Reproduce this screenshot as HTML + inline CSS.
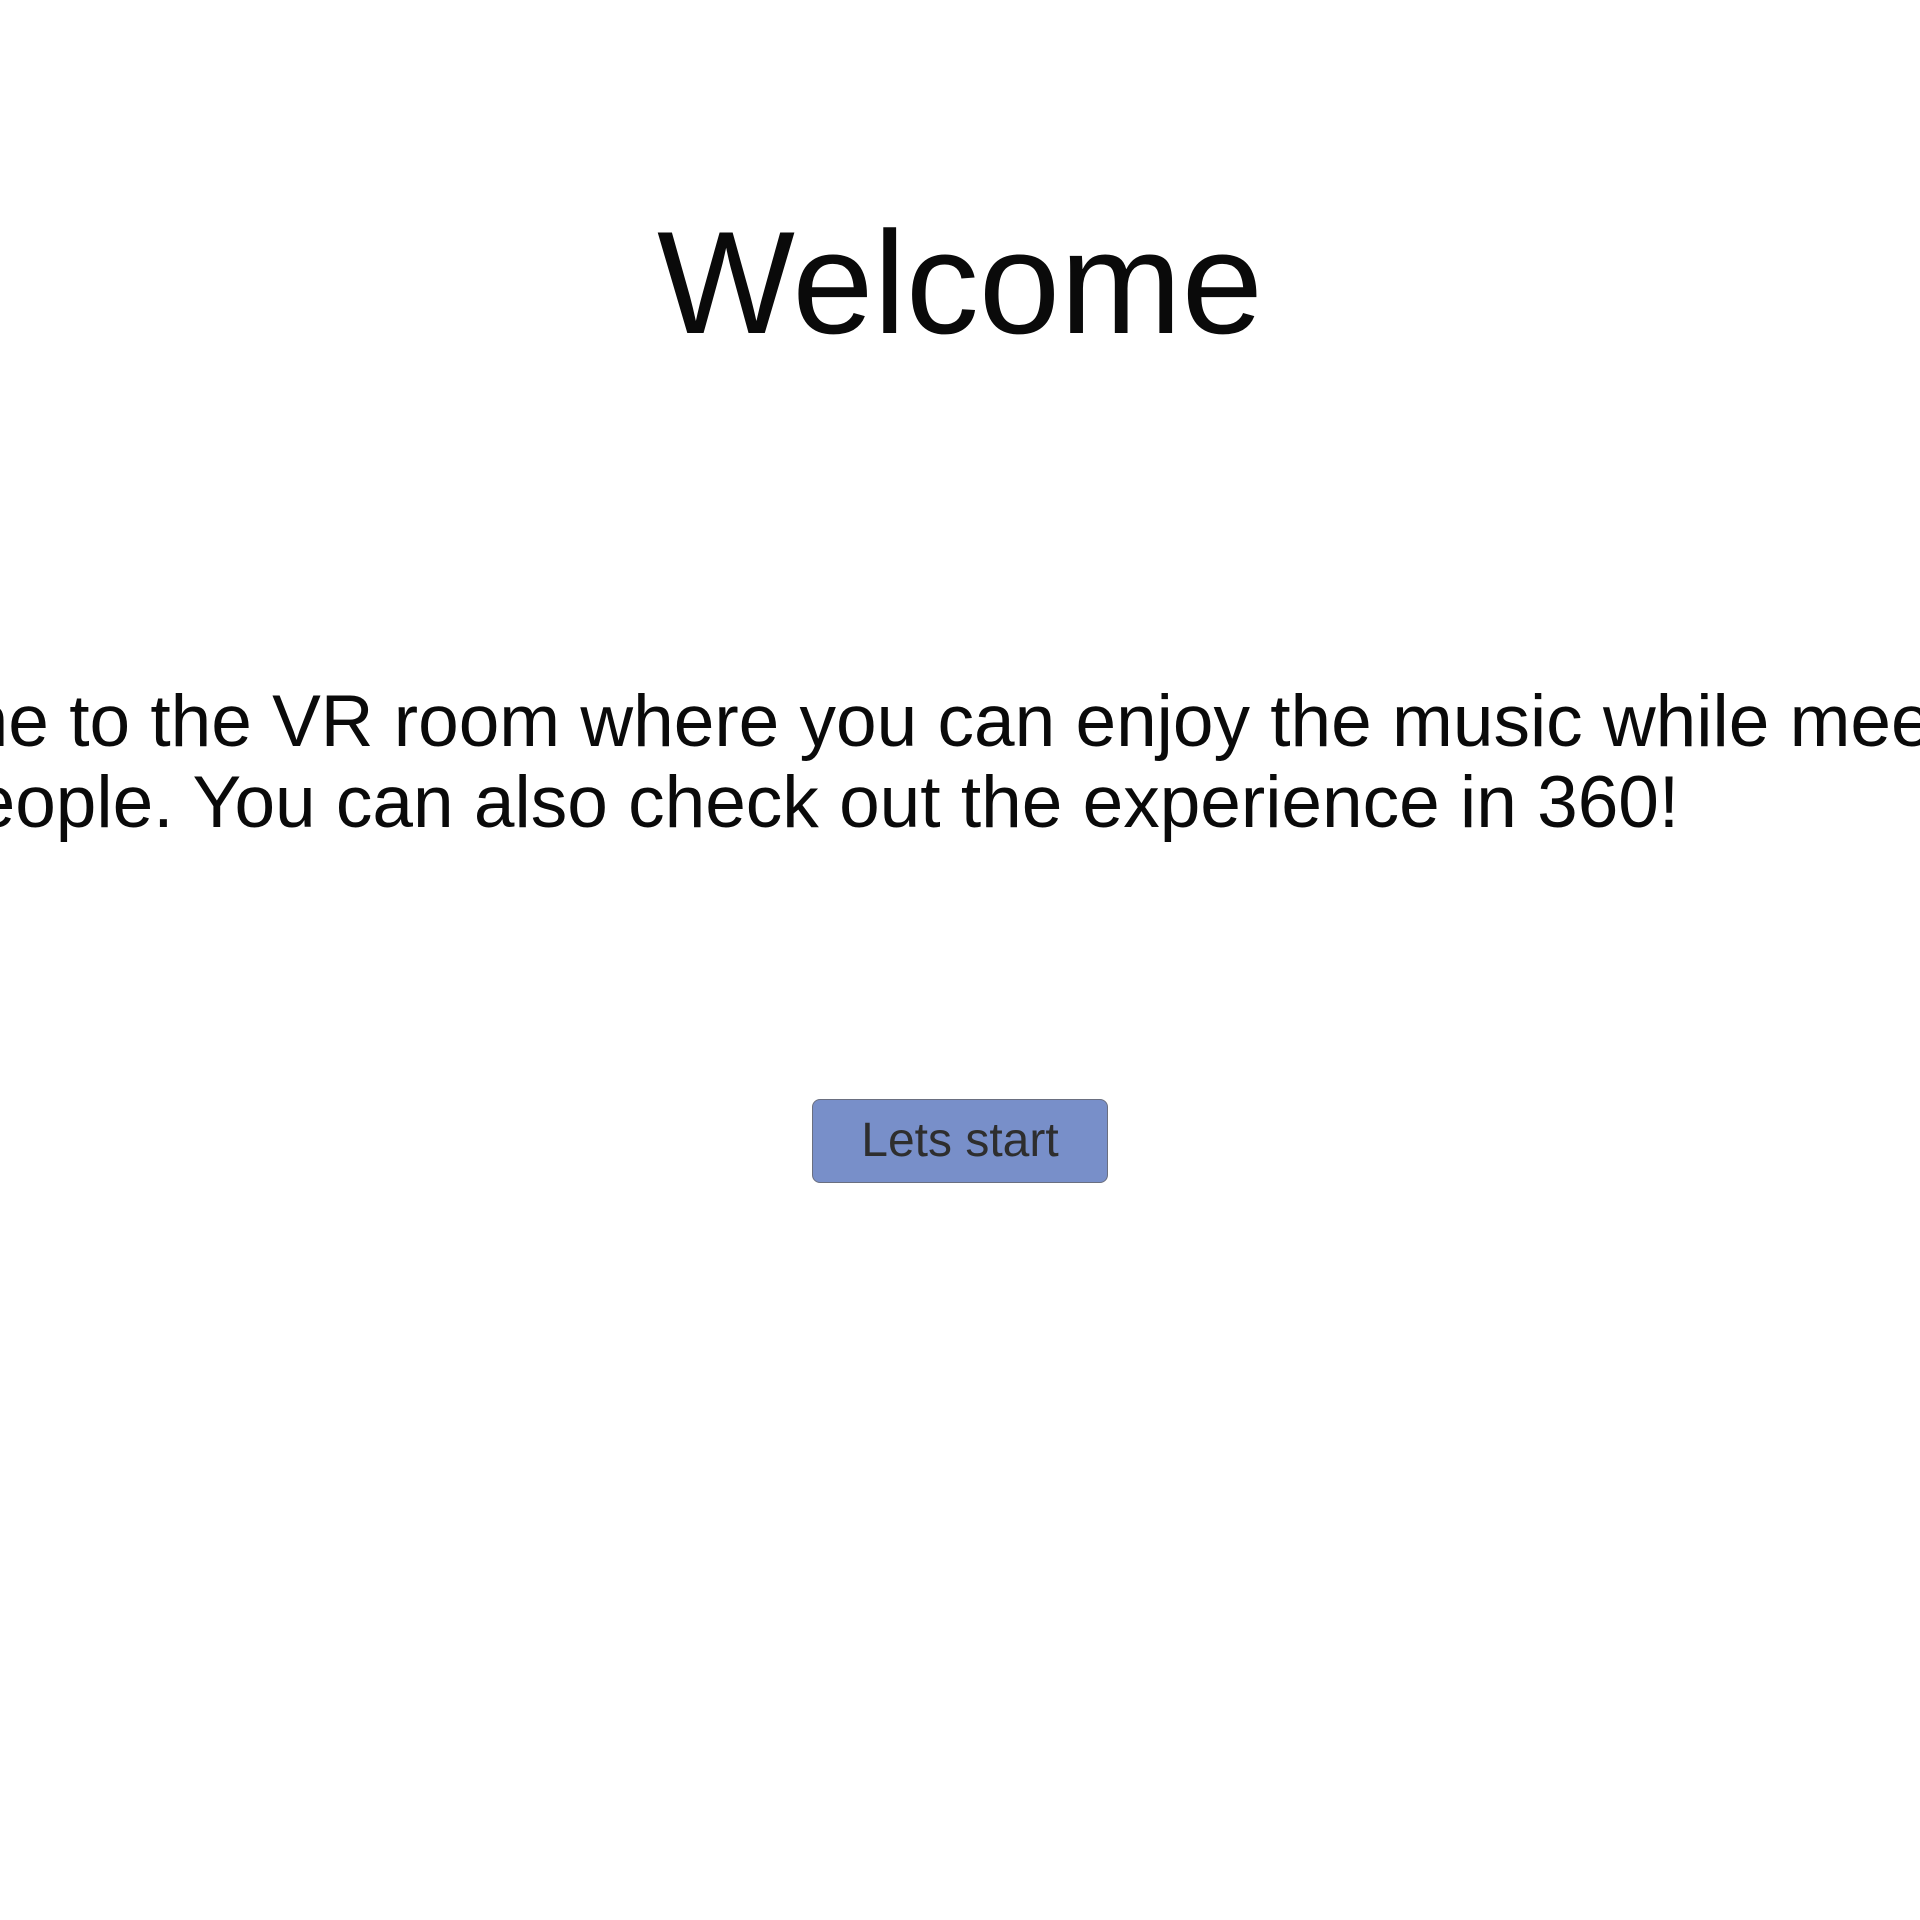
<!DOCTYPE html>
<html><head><meta charset="utf-8"><style>
html,body{margin:0;padding:0;background:#fff;width:1920px;height:1920px;overflow:hidden;position:relative;font-family:"Liberation Sans",Arial,sans-serif;}
.t{position:absolute;white-space:nowrap;color:#0a0a0a;}
#h{left:0;width:1920px;text-align:center;top:210px;font-size:146px;line-height:146px;}
.p{font-size:73px;line-height:82px;}
#b{position:absolute;left:812px;top:1099px;width:294px;height:82px;background:#788fc9;border:1px solid #6a6f80;border-radius:8px;color:#2e2e2e;font-size:48px;line-height:82px;text-align:center;}
</style></head><body>
<div class="t" id="h">Welcome</div>
<div class="t p" style="left:-254px;top:681px;">Welcome to the VR room where you can enjoy the music while meeting</div>
<div class="t p" style="left:-66px;top:762px;">people. You can also check out the experience in 360!</div>
<div id="b">Lets start</div>
</body></html>
